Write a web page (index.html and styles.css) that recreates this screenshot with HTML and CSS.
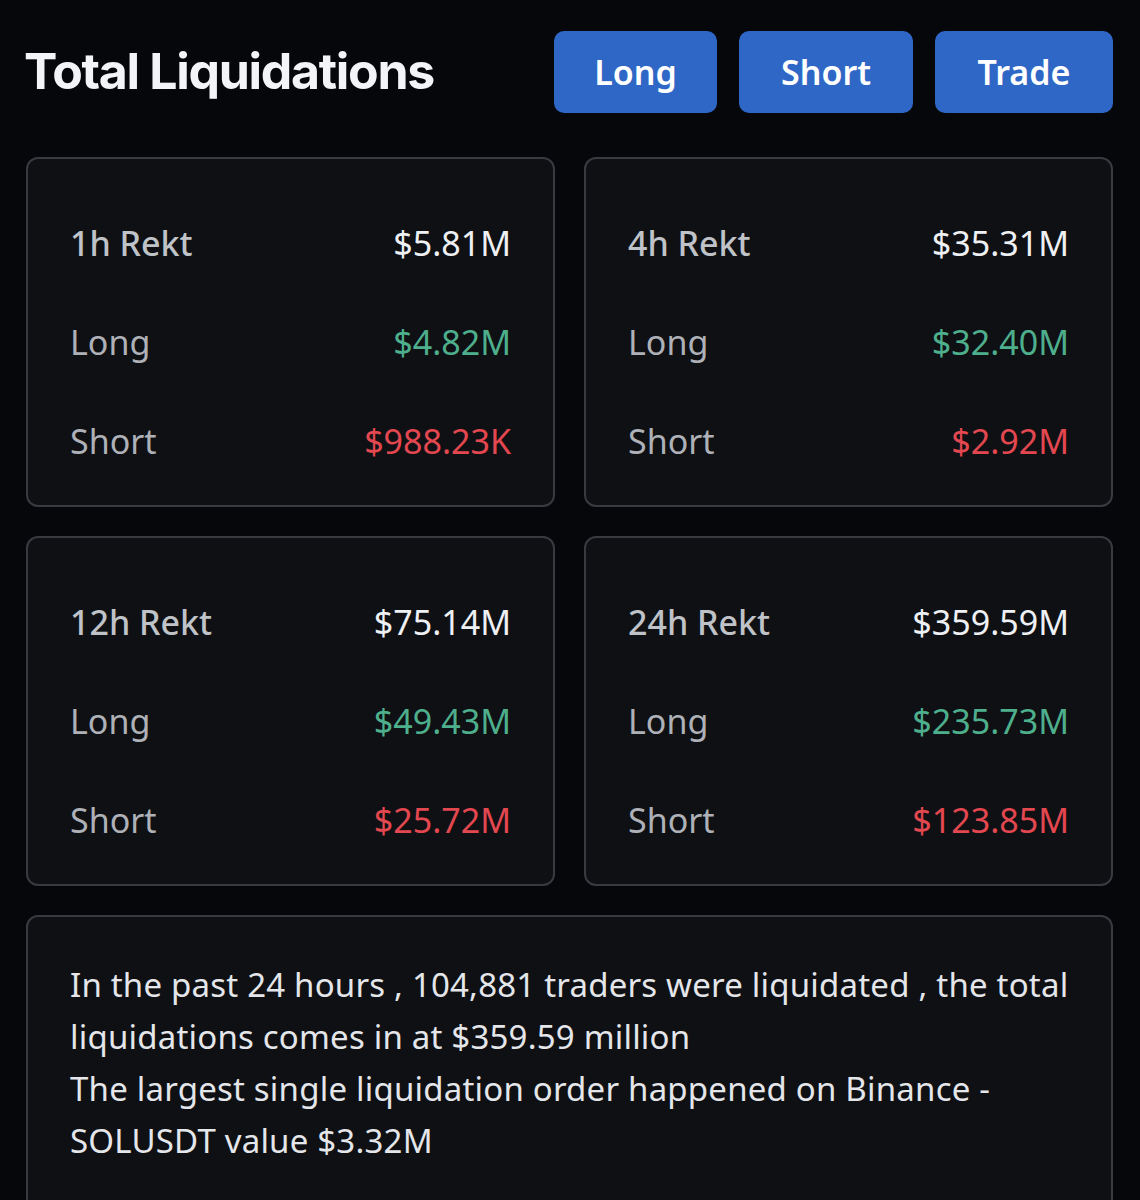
FILE: index.html
```html
<!DOCTYPE html>
<html lang="en">
<head>
<meta charset="utf-8">
<title>Total Liquidations</title>
<link rel="stylesheet" href="styles.css">
</head>
<body>
<main class="page">
  <header class="header">
    <h1 class="title">Total Liquidations</h1>
    <nav class="actions">
      <button class="btn btn-long">Long</button>
      <button class="btn btn-short">Short</button>
      <button class="btn btn-trade">Trade</button>
    </nav>
  </header>

  <section class="grid">
    <div class="card">
      <div class="row"><span class="label head">1h Rekt</span><span class="value total">$5.81M</span></div>
      <div class="row"><span class="label">Long</span><span class="value long">$4.82M</span></div>
      <div class="row"><span class="label">Short</span><span class="value short">$988.23K</span></div>
    </div>
    <div class="card">
      <div class="row"><span class="label head">4h Rekt</span><span class="value total">$35.31M</span></div>
      <div class="row"><span class="label">Long</span><span class="value long">$32.40M</span></div>
      <div class="row"><span class="label">Short</span><span class="value short">$2.92M</span></div>
    </div>
    <div class="card">
      <div class="row"><span class="label head">12h Rekt</span><span class="value total">$75.14M</span></div>
      <div class="row"><span class="label">Long</span><span class="value long">$49.43M</span></div>
      <div class="row"><span class="label">Short</span><span class="value short">$25.72M</span></div>
    </div>
    <div class="card">
      <div class="row"><span class="label head">24h Rekt</span><span class="value total">$359.59M</span></div>
      <div class="row"><span class="label">Long</span><span class="value long">$235.73M</span></div>
      <div class="row"><span class="label">Short</span><span class="value short">$123.85M</span></div>
    </div>
  </section>

  <section class="summary">
    <p>In the past 24 hours , 104,881 traders were liquidated , the total liquidations comes in at $359.59 million</p>
    <p>The largest single liquidation order happened on Binance - SOLUSDT value $3.32M</p>
  </section>
</main>
</body>
</html>
```

FILE: styles.css
```css
html, body {
  margin: 0;
  padding: 0;
  background: #05070b;
}

body {
  font-family: "Noto Sans", "Roboto", "Liberation Sans", sans-serif;
  color: #eceef1;
  height: 1200px;
  overflow: hidden;
}

.page {
  padding: 31px 27px 0 26px;
}

.header {
  display: flex;
  align-items: center;
  justify-content: space-between;
  height: 82px;
}

.title {
  margin: -2px 0 0 -2px;
  font-family: "Inter", "Liberation Sans", sans-serif;
  font-weight: 700;
  font-size: 50px;
  letter-spacing: -1.3px;
  color: #f2f4f7;
}

.actions {
  display: flex;
  gap: 22px;
}

.btn {
  height: 82px;
  border: none;
  border-radius: 10px;
  background: #2f67c6;
  color: #ffffff;
  font-family: "Noto Sans", "Roboto", sans-serif;
  font-weight: 600;
  font-size: 34px;
  padding: 0;
}

.btn-long { width: 163px; }
.btn-short { width: 174px; }
.btn-trade { width: 178px; }

.grid {
  margin-top: 44px;
  display: grid;
  grid-template-columns: 1fr 1fr;
  gap: 29px;
}

.card {
  box-sizing: border-box;
  height: 350px;
  border: 2px solid #383a3f;
  border-radius: 12px;
  background: #0e1014;
  padding: 34px 42px 0 42px;
}

.row {
  display: flex;
  align-items: center;
  justify-content: space-between;
  height: 99px;
  font-size: 34px;
}

.label {
  color: #aeb1b7;
  font-weight: 400;
}

.label.head {
  color: #bfc2c7;
  font-weight: 500;
}

.value.total { color: #eef0f3; }
.value.long { color: #4eaf8d; }
.value.short { color: #e3474f; }

.summary {
  box-sizing: border-box;
  margin-top: 29px;
  height: 320px;
  border: 2px solid #383a3f;
  border-radius: 12px;
  background: #0e1014;
  padding: 42px 42px 0 42px;
}

.summary p {
  margin: 0;
  font-size: 33px;
  letter-spacing: 0.2px;
  line-height: 52px;
  color: #e4e6ea;
}
```
